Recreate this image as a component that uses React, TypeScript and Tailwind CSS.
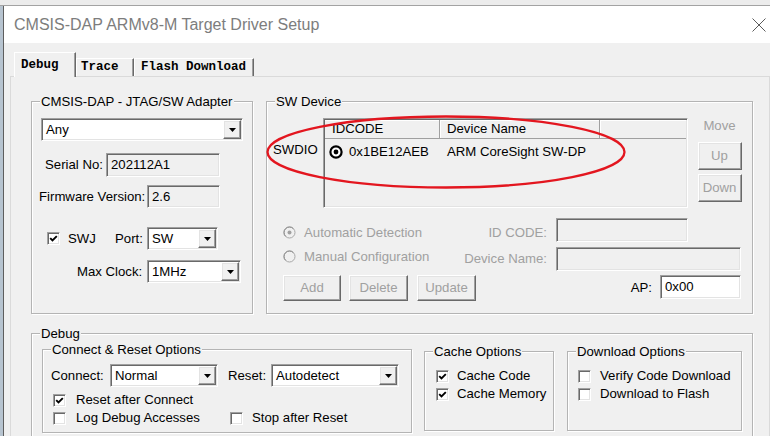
import React from "react";

const sunken =
  "border border-t-[#a0a0a0] border-l-[#a0a0a0] border-b-white border-r-white shadow-[inset_1px_1px_0_#696969,inset_-1px_-1px_0_#e3e3e3]";
const raised =
  "border border-t-white border-l-white border-b-[#696969] border-r-[#696969] shadow-[inset_-1px_-1px_0_#a0a0a0,inset_1px_1px_0_#e3e3e3]";

function Arrow() {
  return (
    <div className={`${raised} bg-[#f0f0f0] w-[18px] shrink-0 flex items-center justify-center`}>
      <svg width="7" height="4" viewBox="0 0 7 4">
        <path d="M0 0H7L3.5 4Z" fill="#000" />
      </svg>
    </div>
  );
}

function Combo({ w, value }: { w: string; value: string }) {
  return (
    <div className={`${sunken} ${w} h-[23px] shrink-0 bg-white flex items-stretch p-[1px]`}>
      <span className="flex-1 pl-[3px] leading-[19px] whitespace-nowrap overflow-hidden">{value}</span>
      <Arrow />
    </div>
  );
}

function Field({ cls, value, white }: { cls: string; value?: string; white?: boolean }) {
  return (
    <div
      className={`${sunken} ${cls} shrink-0 ${white ? "bg-white" : "bg-[#f0f0f0]"} flex items-center pl-[4px] whitespace-nowrap`}
    >
      {value}
    </div>
  );
}

function Check({ checked }: { checked?: boolean }) {
  return (
    <div className={`${sunken} w-[13px] h-[13px] bg-white flex items-center justify-center shrink-0`}>
      {checked && (
        <svg width="9" height="9" viewBox="0 0 9 9">
          <path d="M1.2 4.1L3.5 6.5L7.8 2.1" stroke="#000" strokeWidth="1.9" fill="none" />
        </svg>
      )}
    </div>
  );
}

function Btn({ cls, label }: { cls: string; label: string }) {
  return (
    <div className={`${raised} ${cls} bg-[#f0f0f0] shrink-0 flex items-center justify-center text-[#a0a0a0]`}>
      {label}
    </div>
  );
}

function DisRadio({ on }: { on?: boolean }) {
  return (
    <svg width="13" height="13" viewBox="0 0 13 13" className="shrink-0">
      <circle cx="6.5" cy="6.5" r="5.5" fill="#f0f0f0" stroke="#a8a8a8" strokeWidth="1" />
      <path d="M2.6 10.4A5.5 5.5 0 0 1 10.4 2.6" stroke="#8c8c8c" strokeWidth="1" fill="none" />
      {on && <circle cx="6.5" cy="6.5" r="2" fill="#a0a0a0" />}
    </svg>
  );
}

function ListRadio() {
  return (
    <svg width="14" height="14" viewBox="0 0 14 14" className="shrink-0">
      <circle cx="7" cy="7" r="5.6" fill="#fff" stroke="#000" strokeWidth="2.2" />
      <circle cx="7" cy="7" r="2.4" fill="#000" />
    </svg>
  );
}

function Group({
  title,
  cls,
  children,
}: {
  title: string;
  cls: string;
  children?: React.ReactNode;
}) {
  return (
    <div className={`border border-[#b4b4b4] shadow-[inset_1px_1px_0_#fff,1px_1px_0_#fff] shrink-0 ${cls}`}>
      <div className="-mt-[8px] ml-[8px] px-[1px] w-fit bg-[#f0f0f0] leading-[15px] whitespace-nowrap">
        {title}
      </div>
      {children}
    </div>
  );
}

export default function App() {
  return (
    <div className="relative w-[770px] h-[436px] overflow-hidden bg-[#f0f0f0] font-['Liberation_Sans',Arial,sans-serif] text-[13.2px] text-black flex flex-col">
      <div className="h-[6px] shrink-0 bg-[#ececec] border-b border-[#a3a3a3]" />
      <div className="flex flex-1 min-h-0">
        <div className="w-[4px] shrink-0 bg-[#b7c4d0] border-r border-[#5e5e5e]" />
        <div className="flex-1 flex flex-col min-w-0">
          {/* Title bar */}
          <div className="h-[37px] shrink-0 bg-white flex items-center justify-between pl-[10px] pr-[4px]">
            <span className="text-[16px] text-[#7d7d7d] whitespace-nowrap">CMSIS-DAP ARMv8-M Target Driver Setup</span>
            <svg width="14" height="14" viewBox="0 0 14 14">
              <path d="M0.5 0.5L13.5 13.5M13.5 0.5L0.5 13.5" stroke="#5a5a5a" strokeWidth="1" />
            </svg>
          </div>

          {/* Body */}
          <div className="flex-1 flex flex-col pt-[9px]">
            {/* Tabs */}
            <div className="relative z-10 -mb-[1px] ml-[10px] flex items-end h-[25px] font-['Liberation_Mono',monospace] font-bold text-[12.5px]">
              <div className="w-[62px] h-[25px] bg-[#f0f0f0] border-t border-l border-white border-r border-r-[#696969] shadow-[inset_-1px_0_0_#a0a0a0] pl-[6px] pt-[5px] leading-[14px]">
                Debug
              </div>
              <div className="w-[58px] h-[18px] mb-[1px] border-t border-l border-white border-r border-r-[#696969] shadow-[inset_-1px_0_0_#a0a0a0] pl-[4px] pt-[1px] leading-[14px]">
                Trace
              </div>
              <div className="w-[120px] h-[18px] mb-[1px] border-t border-l border-white border-r border-r-[#696969] shadow-[inset_-1px_0_0_#a0a0a0] pl-[6px] pt-[1px] leading-[14px] whitespace-nowrap">
                Flash Download
              </div>
            </div>

            {/* Panel */}
            <div className="flex-1 ml-[6px] w-[760px] border-t border-l border-r border-[#dadada] pl-[20px] pt-[24px]">
              <div className="flex gap-[13px]">
                {/* Adapter group */}
                <Group title="CMSIS-DAP - JTAG/SW Adapter" cls="w-[222px] h-[213px]">
                  <div className="mt-[9px] ml-[9px]">
                    <Combo w="w-[202px]" value="Any" />
                  </div>
                  <div className="mt-[12px] ml-[13px] h-[24px] flex items-center">
                    <span className="w-[61px] whitespace-nowrap">Serial No:</span>
                    <Field cls="w-[114px] h-[24px]" value="202112A1" />
                  </div>
                  <div className="mt-[8px] ml-[7px] h-[23px] flex items-center">
                    <span className="w-[108px] whitespace-nowrap">Firmware Version:</span>
                    <Field cls="w-[73px] h-[23px]" value="2.6" />
                  </div>
                  <div className="mt-[19px] ml-[15px] h-[23px] flex items-center">
                    <Check checked />
                    <span className="ml-[8px] w-[47px]">SWJ</span>
                    <span className="w-[32px]">Port:</span>
                    <Combo w="w-[71px]" value="SW" />
                  </div>
                  <div className="mt-[10px] ml-[45px] h-[23px] flex items-center">
                    <span className="w-[70px] whitespace-nowrap">Max Clock:</span>
                    <Combo w="w-[94px]" value="1MHz" />
                  </div>
                </Group>

                {/* SW Device group */}
                <Group title="SW Device" cls="w-[487px] h-[213px]">
                  <div className="mt-[9px] flex items-start">
                    <div className="ml-[6px] w-[50px] pt-[24px] leading-[15px]">SWDIO</div>
                    <div className={`${sunken} w-[365px] h-[90px] bg-[#f0f0f0] p-[1px] flex flex-col`}>
                      <div className="h-[19px] flex border-b border-[#a0a0a0] shadow-[inset_0_1px_0_#fff]">
                        <div className="w-[115px] border-r border-[#a0a0a0] pl-[7px] leading-[18px]">IDCODE</div>
                        <div className="w-[160px] border-r border-[#a0a0a0] border-l border-l-white pl-[6px] leading-[18px] whitespace-nowrap">
                          Device Name
                        </div>
                        <div className="flex-1 border-l border-l-white" />
                      </div>
                      <div className="mt-[4px] h-[18px] flex items-center">
                        <div className="w-[115px] pl-[4px] flex items-center">
                          <ListRadio />
                          <span className="ml-[6px]">0x1BE12AEB</span>
                        </div>
                        <div className="pl-[7px] whitespace-nowrap">ARM CoreSight SW-DP</div>
                      </div>
                    </div>
                    <div className="ml-[9px] w-[45px] flex flex-col items-center text-[#a0a0a0]">
                      <div className="leading-[15px]">Move</div>
                      <Btn cls="mt-[9px] w-[44px] h-[28px]" label="Up" />
                      <Btn cls="mt-[4px] w-[44px] h-[28px]" label="Down" />
                    </div>
                  </div>

                  <div className="mt-[10px] ml-[16px] h-[24px] flex items-center">
                    <div className="w-[170px] mt-[5px] flex items-center text-[#a0a0a0]">
                      <DisRadio on />
                      <span className="ml-[8px] whitespace-nowrap">Automatic Detection</span>
                    </div>
                    <div className="w-[94px] mt-[5px] text-right text-[#a0a0a0]">ID CODE:</div>
                    <Field cls="ml-[9px] w-[132px] h-[24px]" />
                  </div>
                  <div className="mt-[5px] ml-[16px] h-[24px] flex items-center">
                    <div className="w-[170px] mb-[5px] flex items-center text-[#a0a0a0]">
                      <DisRadio />
                      <span className="ml-[8px] whitespace-nowrap">Manual Configuration</span>
                    </div>
                    <div className="w-[94px] text-right text-[#a0a0a0] whitespace-nowrap">Device Name:</div>
                    <Field cls="ml-[9px] w-[185px] h-[24px]" />
                  </div>
                  <div className="mt-[4px] ml-[16px] h-[26px] flex items-center">
                    <Btn cls="w-[58px] h-[26px]" label="Add" />
                    <Btn cls="ml-[8px] w-[59px] h-[26px]" label="Delete" />
                    <Btn cls="ml-[9px] w-[59px] h-[26px]" label="Update" />
                    <div className="w-[176px] text-right">AP:</div>
                    <Field cls="ml-[8px] w-[81px] h-[24px] self-start" value="0x00" white />
                  </div>
                </Group>
              </div>

              {/* Debug group */}
              <Group title="Debug" cls="mt-[19px] w-[722px] h-[120px]">
                <div className="flex items-start">
                  <Group title="Connect & Reset Options" cls="ml-[10px] mt-[8px] w-[370px] h-[84px]">
                    <div className="mt-[7px] ml-[8px] h-[23px] flex items-center">
                      <span className="w-[59px]">Connect:</span>
                      <Combo w="w-[108px]" value="Normal" />
                      <span className="ml-[10px] w-[43px]">Reset:</span>
                      <Combo w="w-[128px]" value="Autodetect" />
                    </div>
                    <div className="mt-[4px] ml-[10px] h-[18px] flex items-center">
                      <Check checked />
                      <span className="ml-[10px] whitespace-nowrap">Reset after Connect</span>
                    </div>
                    <div className="ml-[10px] h-[18px] flex items-center">
                      <div className="w-[177px] flex items-center">
                        <Check />
                        <span className="ml-[10px] whitespace-nowrap">Log Debug Accesses</span>
                      </div>
                      <Check />
                      <span className="ml-[9px] whitespace-nowrap">Stop after Reset</span>
                    </div>
                  </Group>

                  <Group title="Cache Options" cls="ml-[12px] mt-[10px] w-[130px] h-[80px]">
                    <div className="mt-[8px] ml-[11px] h-[18px] flex items-center">
                      <Check checked />
                      <span className="ml-[8px] whitespace-nowrap">Cache Code</span>
                    </div>
                    <div className="ml-[11px] h-[18px] flex items-center">
                      <Check checked />
                      <span className="ml-[8px] whitespace-nowrap">Cache Memory</span>
                    </div>
                  </Group>

                  <Group title="Download Options" cls="ml-[13px] mt-[10px] w-[175px] h-[80px]">
                    <div className="mt-[8px] ml-[10px] h-[18px] flex items-center">
                      <Check />
                      <span className="ml-[9px] whitespace-nowrap">Verify Code Download</span>
                    </div>
                    <div className="ml-[10px] h-[18px] flex items-center">
                      <Check />
                      <span className="ml-[9px] whitespace-nowrap">Download to Flash</span>
                    </div>
                  </Group>
                </div>
              </Group>
            </div>
          </div>
        </div>
      </div>

      {/* Red annotation ellipse */}
      <svg className="absolute left-0 top-0 pointer-events-none" width="770" height="436" viewBox="0 0 770 436">
        <ellipse cx="446" cy="152" rx="178.5" ry="35.5" fill="none" stroke="#e3161f" strokeWidth="2.3" />
      </svg>
    </div>
  );
}
